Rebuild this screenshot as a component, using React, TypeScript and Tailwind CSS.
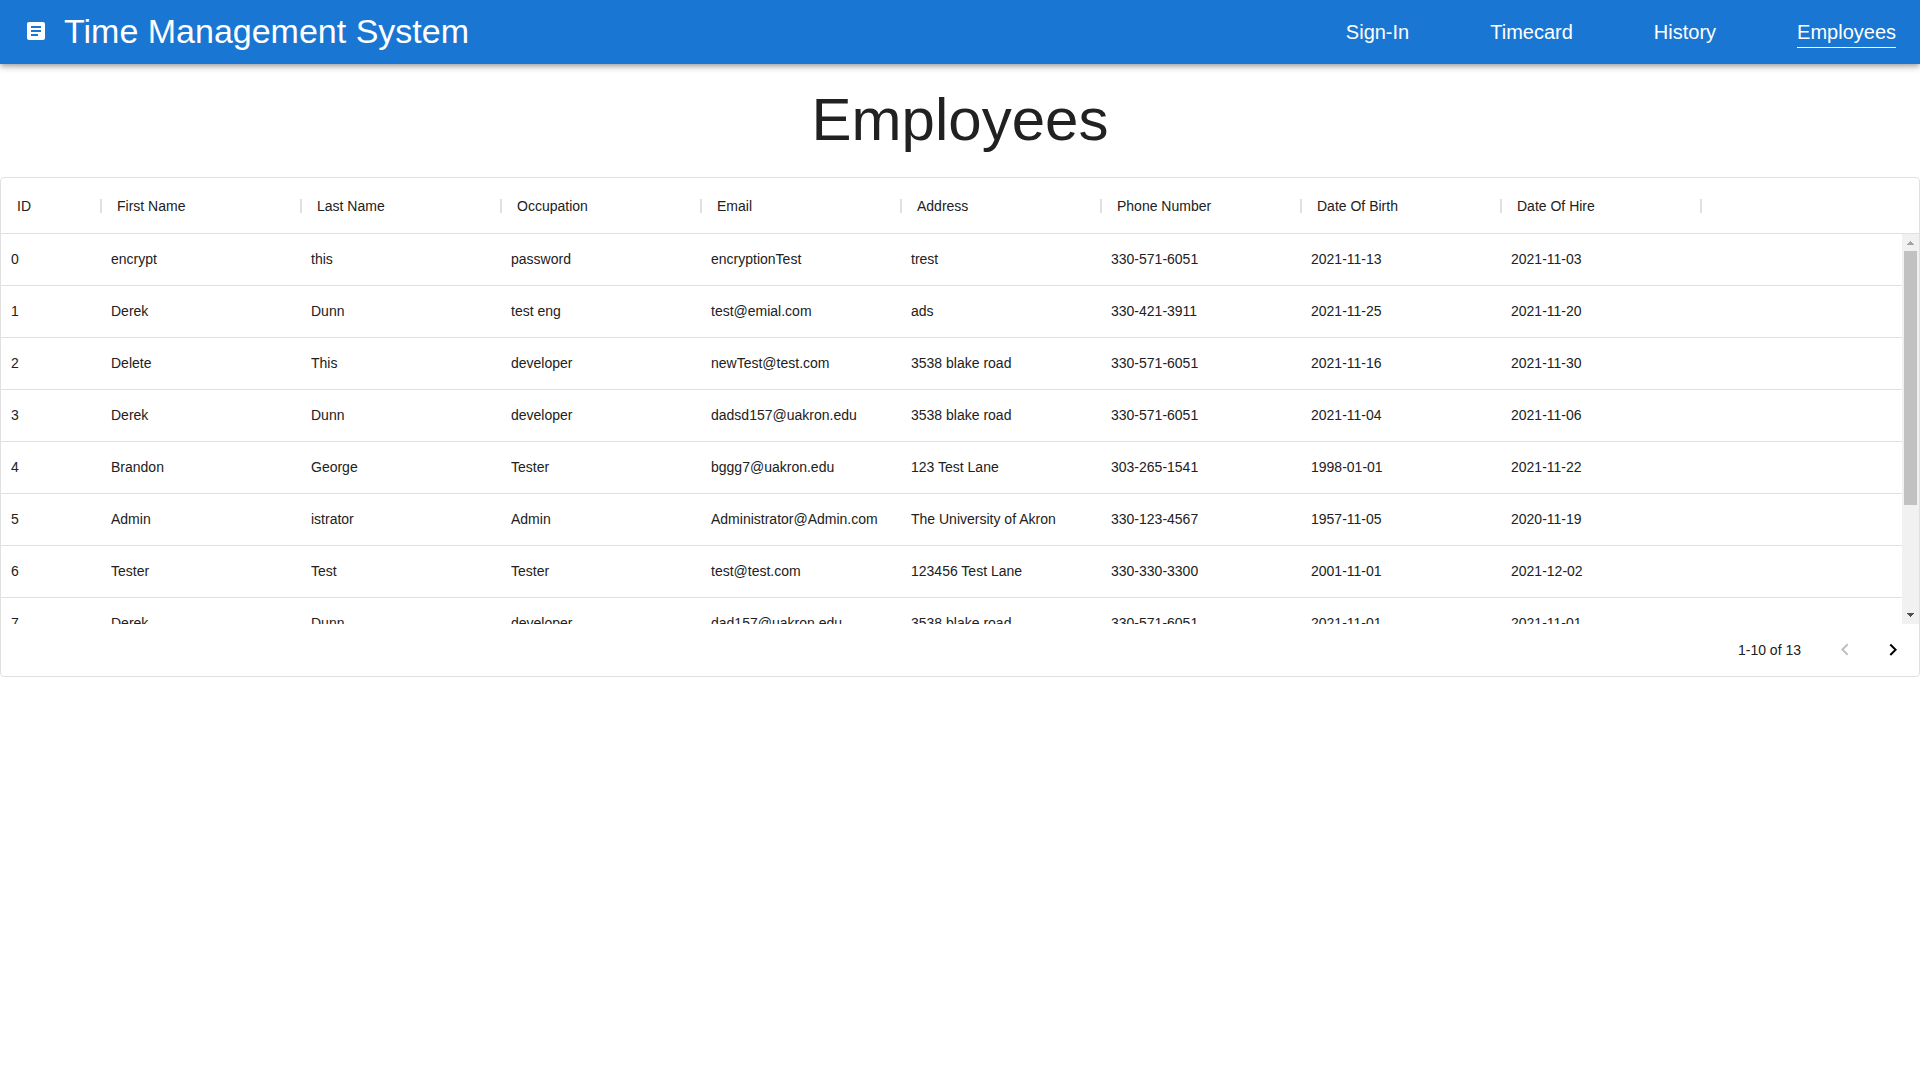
const navItems = ['Sign-In', 'Timecard', 'History', 'Employees'];

const columns = [
  'ID',
  'First Name',
  'Last Name',
  'Occupation',
  'Email',
  'Address',
  'Phone Number',
  'Date Of Birth',
  'Date Of Hire',
];

const rows = [
  ['0', 'encrypt', 'this', 'password', 'encryptionTest', 'trest', '330-571-6051', '2021-11-13', '2021-11-03'],
  ['1', 'Derek', 'Dunn', 'test eng', 'test@emial.com', 'ads', '330-421-3911', '2021-11-25', '2021-11-20'],
  ['2', 'Delete', 'This', 'developer', 'newTest@test.com', '3538 blake road', '330-571-6051', '2021-11-16', '2021-11-30'],
  ['3', 'Derek', 'Dunn', 'developer', 'dadsd157@uakron.edu', '3538 blake road', '330-571-6051', '2021-11-04', '2021-11-06'],
  ['4', 'Brandon', 'George', 'Tester', 'bggg7@uakron.edu', '123 Test Lane', '303-265-1541', '1998-01-01', '2021-11-22'],
  ['5', 'Admin', 'istrator', 'Admin', 'Administrator@Admin.com', 'The University of Akron', '330-123-4567', '1957-11-05', '2020-11-19'],
  ['6', 'Tester', 'Test', 'Tester', 'test@test.com', '123456 Test Lane', '330-330-3300', '2001-11-01', '2021-12-02'],
  ['7', 'Derek', 'Dunn', 'developer', 'dad157@uakron.edu', '3538 blake road', '330-571-6051', '2021-11-01', '2021-11-01'],
];

function Header() {
  return (
    <header className="relative flex h-16 items-center bg-[#1976d2] px-6 pb-0.5 text-white shadow-[0_2px_4px_-1px_rgba(0,0,0,0.2),0_4px_5px_0_rgba(0,0,0,0.14),0_1px_10px_0_rgba(0,0,0,0.12)]">
      <svg viewBox="0 0 24 24" className="size-6" fill="currentColor" aria-hidden="true">
        <path d="M19 3H5c-1.1 0-2 .9-2 2v14c0 1.1.9 2 2 2h14c1.1 0 2-.9 2-2V5c0-1.1-.9-2-2-2zm-5 14H7v-2h7v2zm3-4H7v-2h10v2zm0-4H7V7h10v2z" />
      </svg>
      <div className="ml-4 grow text-[34px] leading-10">Time Management System</div>
      <nav className="flex gap-[81px] text-xl leading-[30px]">
        {navItems.map((item) => (
          <a
            key={item}
            href="#"
            aria-current={item === 'Employees' ? 'page' : undefined}
            className="border-b border-transparent pt-0.5 aria-[current=page]:border-white"
          >
            {item}
          </a>
        ))}
      </nav>
    </header>
  );
}

function ScrollBar() {
  return (
    <div className="flex flex-col" aria-hidden="true">
      <div className="h-14 border-b border-[#e0e0e0]" />
      <div className="flex grow flex-col items-center bg-[#f1f1f1]">
        <svg viewBox="0 0 17 17" className="size-[17px]" fill="#a3a3a3">
          <path d="M5 11h7v-1h-1v-1h-1v-1h-1v-1h-1v1h-1v1h-1v1h-1z" />
        </svg>
        <div className="h-[254px] w-[13px] bg-[#c1c1c1]" />
        <svg viewBox="0 0 17 17" className="mt-auto size-[17px]" fill="#505050">
          <path d="M5 6h7v1h-1v1h-1v1h-1v1h-1v-1h-1v-1h-1v-1h-1z" />
        </svg>
      </div>
    </div>
  );
}

function Pagination() {
  return (
    <div className="flex h-[52px] items-center justify-end pr-0.5 text-sm">
      <span className="mr-5">1-10 of 13</span>
      <button type="button" disabled aria-label="Previous page" className="p-3 text-black/25">
        <svg viewBox="0 0 24 24" className="size-6" fill="currentColor">
          <path d="M15.41 16.09l-4.58-4.59 4.58-4.59L14 5.5l-6 6 6 6z" />
        </svg>
      </button>
      <button type="button" aria-label="Next page" className="p-3 text-black">
        <svg viewBox="0 0 24 24" className="size-6" fill="currentColor">
          <path d="M8.59 16.34l4.58-4.59-4.58-4.59L10 5.75l6 6-6 6z" />
        </svg>
      </button>
    </div>
  );
}

export default function App() {
  return (
    <div className="min-h-screen bg-white font-['Liberation_Sans',Arial,sans-serif] text-[#212121]">
      <Header />
      <main>
        <h1 className="pt-5 pb-[21px] text-center text-6xl leading-[72px]">Employees</h1>
        <section className="rounded border border-[#e0e0e0]" aria-label="Employees">
          <div className="grid h-[446px] grid-cols-[1fr_17px] overflow-hidden">
            <div className="h-[446px] overflow-hidden">
              <table className="w-full table-fixed border-separate border-spacing-0 text-left text-sm">
                <colgroup>
                  {columns.map((name) => (
                    <col key={name} className={name === 'ID' ? 'w-[100px]' : 'w-[200px]'} />
                  ))}
                  <col />
                </colgroup>
                <thead>
                  <tr className="h-14">
                    {columns.map((name) => (
                      <th key={name} scope="col" className="relative border-b border-[#e0e0e0] px-4 font-normal">
                        {name}
                        <span className="absolute top-[21px] -right-px h-3.5 w-0.5 bg-[#e0e0e0]" />
                      </th>
                    ))}
                    <td className="border-b border-[#e0e0e0]" />
                  </tr>
                </thead>
                <tbody>
                  {rows.map((row) => (
                    <tr key={row[0]} className="h-[52px]">
                      {row.map((cell, i) => (
                        <td key={columns[i]} className="truncate border-b border-[#e0e0e0] px-2.5 pb-0.5">
                          {cell}
                        </td>
                      ))}
                      <td className="border-b border-[#e0e0e0]" />
                    </tr>
                  ))}
                </tbody>
              </table>
            </div>
            <ScrollBar />
          </div>
          <Pagination />
        </section>
      </main>
    </div>
  );
}
